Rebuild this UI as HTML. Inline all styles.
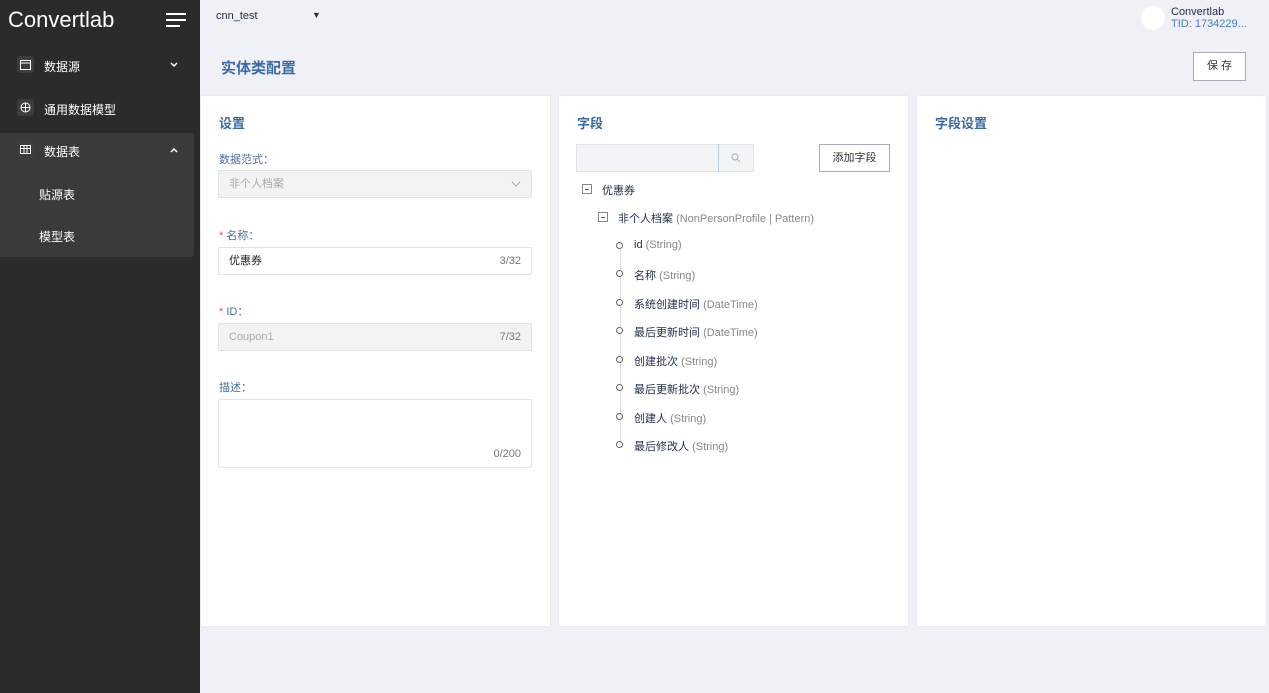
<!DOCTYPE html>
<html><head><meta charset="utf-8"><style>
*{box-sizing:border-box;margin:0;padding:0}
body{width:1269px;height:693px;background:#eff1f6;font-family:"Liberation Sans","Noto Sans CJK SC",sans-serif;position:relative;overflow:hidden;font-size:12px}
.abs{position:absolute}
.side{left:0;top:0;width:200px;height:693px;background:#2b2b2b}
.menu{color:#fff;font-size:12px}
.ic{width:17px;height:17px;border-radius:3px;background:#3d3d3d;position:absolute;left:17px}
.ic svg{position:absolute;left:3px;top:3px}
.panel{background:#fff;top:96px;width:349px;height:530px;box-shadow:0 0 2px rgba(0,0,0,.08)}
.ttl{color:#3a6aa8;font-size:13px;font-weight:bold}
.lbl{color:#4e6fa0;font-size:11px}
.inp{border:1px solid #dfe2e8;border-radius:2px;height:28px;font-size:11px;padding-left:10px;line-height:26px}
.t{color:#1f2d4a;font-size:11px}
.t span{color:#888}
.c{width:7px;height:7px;border:1px solid #666;border-radius:50%;background:#fff}
.box{width:10px;height:10px;border:1px solid #888}
.box:after{content:"";position:absolute;left:2px;top:4px;width:4px;height:1px;background:#666}
</style></head><body>
<div class="abs side">
 <div class="abs" style="left:8px;top:7px;color:#fff;font-size:22px;font-weight:normal;letter-spacing:0px">Convertlab</div>
 <div class="abs" style="left:166px;top:13px;width:20px;height:2px;background:#fff"></div>
 <div class="abs" style="left:166px;top:19px;width:20px;height:2px;background:#fff"></div>
 <div class="abs" style="left:166px;top:25px;width:14px;height:2px;background:#fff"></div>
 <div class="ic" style="top:56px"><svg width="11" height="11" viewBox="0 0 11 11" fill="none" stroke="#fff" stroke-width="1"><rect x="0.5" y="1.5" width="10" height="9"/><line x1="0.5" y1="4" x2="10.5" y2="4"/></svg></div><div class="abs menu" style="left:44px;top:58px">数据源</div>
 <svg class="abs" style="left:170px;top:62px" width="8" height="5" viewBox="0 0 8 5"><path d="M1 1l3 3 3-3" stroke="#fff" stroke-width="1.5" fill="none"/></svg>
 <div class="ic" style="top:99px"><svg width="11" height="11" viewBox="0 0 11 11" fill="none" stroke="#fff" stroke-width="1"><circle cx="5.5" cy="5.5" r="4.5"/><path d="M1 5.5h9M5.5 1v9"/></svg></div><div class="abs menu" style="left:44px;top:101px">通用数据模型</div>
 <div class="abs" style="left:0;top:133px;width:194px;height:124px;background:#3a3a3a;border-radius:0 3px 3px 0"></div>
 <div class="ic" style="top:141px"><svg width="11" height="11" viewBox="0 0 11 11" fill="none" stroke="#fff" stroke-width="1"><rect x="0.5" y="1.5" width="10" height="8"/><path d="M0.5 4.5h10M4 1.5v8M7 1.5v8"/></svg></div><div class="abs menu" style="left:44px;top:143px">数据表</div>
 <svg class="abs" style="left:170px;top:148px" width="8" height="5" viewBox="0 0 8 5"><path d="M1 4l3-3 3 3" stroke="#fff" stroke-width="1.5" fill="none"/></svg>
 <div class="abs menu" style="left:39px;top:186px">贴源表</div>
 <div class="abs menu" style="left:39px;top:228px">模型表</div>
</div>
<div class="abs" style="left:216px;top:10px;font-size:11px;color:#1f2d4a">cnn_test</div>
<div class="abs" style="left:312px;top:10px;font-size:9px;color:#333">▼</div>
<div class="abs" style="left:1141px;top:6px;width:24px;height:24px;border-radius:50%;background:#fff"></div>
<div class="abs" style="left:1171px;top:6px;font-size:11px;color:#1f2d4a">Convertlab</div>
<div class="abs" style="left:1171px;top:18px;font-size:11px;color:#4a7cc0">TID: 1734229...</div>
<div class="abs" style="left:221px;top:57px;font-size:15px;color:#3a6aa8;font-weight:bold">实体类配置</div>
<div class="abs" style="left:1193px;top:52px;width:53px;height:29px;border:1px solid #aab;background:#fff;font-size:11px;color:#333;text-align:center;line-height:27px">保 存</div>

<div class="abs panel" style="left:201px">
 <div class="abs ttl" style="left:18px;top:17px">设置</div>
 <div class="abs lbl" style="left:18px;top:55px">数据范式：</div>
 <div class="abs inp" style="left:17px;top:74px;width:314px;background:#f3f3f3;color:#aaa">非个人档案<svg style="position:absolute;right:10px;top:10px" width="10" height="6" viewBox="0 0 10 6"><path d="M1 1l4 4 4-4" stroke="#aab" fill="none"/></svg></div>
 <div class="abs lbl" style="left:18px;top:131px"><span style="color:#e55">*</span> 名称：</div>
 <div class="abs inp" style="left:17px;top:151px;width:314px;color:#222">优惠券<span style="position:absolute;right:10px;color:#777">3/32</span></div>
 <div class="abs lbl" style="left:18px;top:207px"><span style="color:#e55">*</span> ID：</div>
 <div class="abs inp" style="left:17px;top:227px;width:314px;background:#f3f3f3;color:#aaa">Coupon1<span style="position:absolute;right:10px;color:#777">7/32</span></div>
 <div class="abs lbl" style="left:18px;top:283px">描述：</div>
 <div class="abs inp" style="left:17px;top:303px;width:314px;height:69px"><span style="position:absolute;right:10px;bottom:0;color:#777">0/200</span></div>
</div>

<div class="abs panel" style="left:559px">
 <div class="abs ttl" style="left:18px;top:17px">字段</div>
 <div class="abs" style="left:17px;top:48px;width:178px;height:28px;border:1px solid #dfe2e8;background:#f3f4f6"></div>
 <div class="abs" style="left:159px;top:48px;width:1px;height:28px;background:#b8cde6"></div>
 <svg class="abs" style="left:172px;top:57px" width="10" height="10" viewBox="0 0 10 10" fill="none" stroke="#aaa"><circle cx="4" cy="4" r="3"/><path d="M6.2 6.2L9 9"/></svg>
 <div class="abs" style="left:260px;top:48px;width:71px;height:28px;border:1px solid #aab;font-size:11px;color:#333;text-align:center;line-height:26px">添加字段</div>
 <div class="abs box" style="left:23px;top:88px"></div><div class="abs t" style="left:43px;top:86px">优惠券</div>
 <div class="abs box" style="left:39px;top:116px"></div><div class="abs t" style="left:59px;top:114px">非个人档案 <span>(NonPersonProfile | Pattern)</span></div>
 <div class="abs" style="left:61px;top:152px;width:1px;height:198px;background:#ddd"></div>
 <div class="abs c" style="left:57px;top:146px"></div><div class="abs t" style="left:75px;top:143px">id <span>(String)</span></div>
 <div class="abs c" style="left:57px;top:174px"></div><div class="abs t" style="left:75px;top:171px">名称 <span>(String)</span></div>
 <div class="abs c" style="left:57px;top:203px"></div><div class="abs t" style="left:75px;top:200px">系统创建时间 <span>(DateTime)</span></div>
 <div class="abs c" style="left:57px;top:231px"></div><div class="abs t" style="left:75px;top:228px">最后更新时间 <span>(DateTime)</span></div>
 <div class="abs c" style="left:57px;top:260px"></div><div class="abs t" style="left:75px;top:257px">创建批次 <span>(String)</span></div>
 <div class="abs c" style="left:57px;top:288px"></div><div class="abs t" style="left:75px;top:285px">最后更新批次 <span>(String)</span></div>
 <div class="abs c" style="left:57px;top:317px"></div><div class="abs t" style="left:75px;top:314px">创建人 <span>(String)</span></div>
 <div class="abs c" style="left:57px;top:345px"></div><div class="abs t" style="left:75px;top:342px">最后修改人 <span>(String)</span></div>
</div>

<div class="abs panel" style="left:917px">
 <div class="abs ttl" style="left:18px;top:17px">字段设置</div>
</div>
</body></html>
